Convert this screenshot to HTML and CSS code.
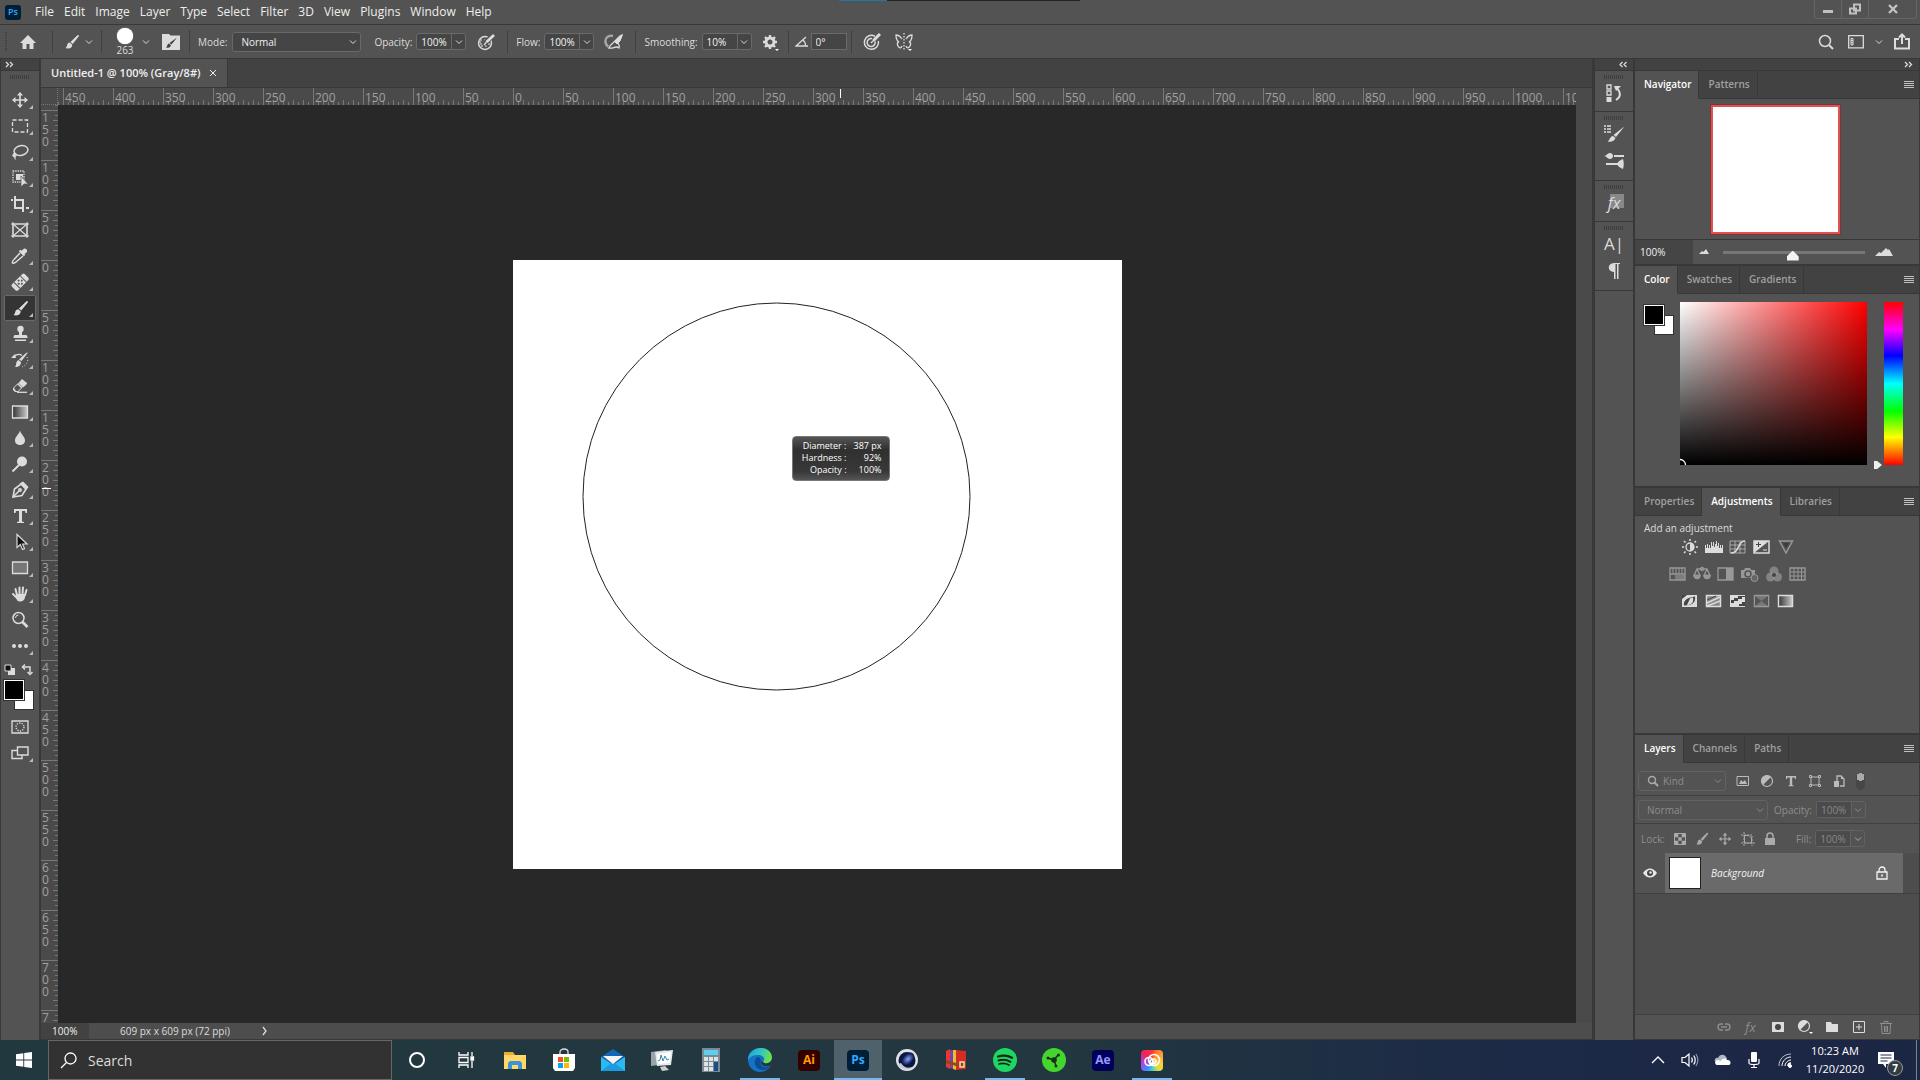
FILE: index.html
```html
<!DOCTYPE html>
<html lang="en">
<head>
    <meta charset="UTF-8">
    <meta name="viewport" content="width=device-width, initial-scale=1.0">
    <title>Untitled-1 @ 100% (Gray/8#)</title>
    <link rel="stylesheet" href="styles.css">
</head>
<body>
    <!-- shared icons -->
    <svg class="defs" width="0" height="0">
        <symbol id="chev" viewBox="0 0 8 8"><path d="M1 2.5l3 3 3-3" fill="none" stroke="currentColor"/></symbol>
        <symbol id="brush" viewBox="0 0 18 18"><path d="M16.5 1.2c.6.5.2 1.400-.2 2L9.800 11.200 7.300 9 14.500 2c.600-.600 1.400-1.300 2-.8zM6.600 9.700l2.600 2.300c.2 2-1.200 3.800-3.400 4.200-1.700.3-3.300 0-4.300-.4 1.600-.6 1.500-1.700 2-3.300.4-1.600 1.500-2.800 3.100-2.800z" fill="currentColor"/></symbol>
        <symbol id="menu" viewBox="0 0 10 9"><path d="M0 1.500h10M0 3.500h10M0 5.500h10M0 7.500h10" stroke="currentColor"/></symbol>
        <symbol id="move" viewBox="0 0 18 18"><path d="M9 3v12M3 9h12" stroke="currentColor" stroke-width="1.600"/><path d="M9 1l3 3.500H6zM9 17l3-3.500H6zM1 9l3.500-3v6zM17 9l-3.500-3v6z" fill="currentColor"/></symbol>
        <symbol id="half" viewBox="0 0 14 14"><circle cx="7" cy="7" r="5.500" fill="none" stroke="currentColor" stroke-width="1.200"/><path d="M3 11a5.600 5.600 0 0 1 8-8z" fill="currentColor"/></symbol>
    </svg>

    <nav class="menubar">
        <span class="ps-logo">Ps</span>
        <a href="#">File</a>
        <a href="#">Edit</a>
        <a href="#">Image</a>
        <a href="#">Layer</a>
        <a href="#">Type</a>
        <a href="#">Select</a>
        <a href="#">Filter</a>
        <a href="#">3D</a>
        <a href="#">View</a>
        <a href="#">Plugins</a>
        <a href="#">Window</a>
        <a href="#">Help</a>
        <div class="top-line"></div>
        <div class="win-btns">
            <button aria-label="Minimize"><svg width="12" height="12"><path d="M1 8.500h10" stroke="currentColor" stroke-width="3"/></svg></button>
            <button aria-label="Restore"><svg width="12" height="12" fill="none" stroke="currentColor" stroke-width="2"><path d="M5 1.500h6v6H5zM1 5.500h6v5H1z"/></svg></button>
            <button class="close" aria-label="Close"><svg width="12" height="12"><path d="M2 2l8 8M10 2l-8 8" stroke="currentColor" stroke-width="2.400"/></svg></button>
        </div>
    </nav>

    <header class="options">
        <i class="grip-v"></i>
        <button class="ico home" aria-label="Home"><svg width="16" height="16"><path d="M8 1L0 9h2.500v6H6.500v-5h3v5h4V9H16z" fill="currentColor"/></svg></button>
        <i class="sep"></i>
        <button class="ico w28" aria-label="Brush"><svg width="16" height="18"><use href="#brush"/></svg></button>
        <button class="ico" aria-label="Tool presets"><svg width="8" height="8"><use href="#chev"/></svg></button>
        <i class="sep"></i>
        <button class="brush-size" aria-label="Brush size"><i class="dot"></i><span>263</span></button>
        <button class="ico w12" aria-label="Brush presets"><svg width="8" height="8"><use href="#chev"/></svg></button>
        <button class="ico sheet" aria-label="Brush settings"><svg width="18" height="18"><path d="M0 1h7l1.500 1.500H18V17H0z" fill="#dcdcdc"/><path d="M15 4.500l-5.500 7-2-1.500zM7 10.500l2 1.700c-.5 2-2.500 3-5 2.500 1.500-1 1-3.800 3-4.200z" fill="#424242"/></svg></button>
        <i class="sep"></i>
        <label for="mode">Mode:</label>
        <span class="select mode"><select id="mode"><option>Normal</option></select><svg width="8" height="8"><use href="#chev"/></svg></span>
        <label class="far" for="opacity">Opacity:</label>
        <span class="num"><input id="opacity" value="100%"><button aria-label="Opacity slider"><svg width="8" height="8"><use href="#chev"/></svg></button></span>
        <button class="ico pressure" aria-label="Pressure for opacity"><svg width="18" height="18" fill="none" stroke="currentColor"><circle cx="8" cy="10" r="6.500" stroke-width="1.400"/><path d="M3 7h2m2 0h2M2 9h2m2 0h2m2 0h2M3 11h2m2 0h2m2 0h2M4 13h2m2 0h2" stroke-width="1.600" opacity=".75"/><path d="M16.500 1.500L9 9l-1.500 2.500" stroke="#535353" stroke-width="5"/><path d="M17 2L9.500 9" stroke-width="2.800"/><path d="M9.500 9L7 12" stroke-width="1.300"/></svg></button>
        <i class="sep"></i>
        <label for="flow">Flow:</label>
        <span class="num"><input id="flow" value="100%"><button aria-label="Flow slider"><svg width="8" height="8"><use href="#chev"/></svg></button></span>
        <button class="ico pressure" aria-label="Airbrush"><svg width="20" height="18" fill="none" stroke="currentColor"><path d="M9 3C4 2 1 5 1.500 9c.3 2.500 1.500 4 3 4.500" stroke-width="2.500" opacity=".6"/><path d="M5 15c1-4 5-5.500 7-8l4-4 2-1-1 3-3 4c-1 2 3 3 1 6-3-3-6 1-9 0z" stroke-width="1.300"/><path d="M11 9l7-7-2 6-3 3z" fill="currentColor"/></svg></button>
        <i class="sep"></i>
        <label for="smooth">Smoothing:</label>
        <span class="num"><input id="smooth" value="10%"><button aria-label="Smoothing slider"><svg width="8" height="8"><use href="#chev"/></svg></button></span>
        <button class="ico gear" aria-label="Smoothing options"><svg width="18" height="18"><circle cx="9" cy="9" r="4" fill="none" stroke="currentColor" stroke-width="3"/><path d="M9 2v3M9 13v3M2 9h3M13 9h3M4 4l2 2M12 12l2 2M14 4l-2 2M6 12l-2 2" stroke="currentColor" stroke-width="2.400"/><path d="M14 16h4l-2 2z" fill="#fff"/></svg></button>
        <i class="sep"></i>
        <label class="angle" for="angle" aria-label="Angle"><svg width="14" height="12" fill="none" stroke="currentColor" stroke-width="1.300"><path d="M11 1L1 10h12"/><path d="M8 4c2 1.500 2.500 4 2.500 6"/></svg></label>
        <input class="box" id="angle" value="0°">
        <i class="sep"></i>
        <button class="ico w32" aria-label="Pressure for size"><svg width="18" height="18" fill="none" stroke="currentColor" stroke-width="1.500"><path d="M15.300 8A7 7 0 1 1 12 3.300M12 8.500A4 4 0 1 1 9 5.600"/><path d="M8 10l3-3" /><path d="M17 1l-6.500 6.500" stroke-width="3"/></svg></button>
        <button class="ico w32" aria-label="Symmetry"><svg width="18" height="18" fill="none" stroke="currentColor" stroke-width="1.300"><path d="M7 6C5 3 3 2 1 2c0 3 1 6 3 7-2 0-2 2-1 4s3 3 4 0M11 6c2-3 4-4 6-4 0 3-1 6-3 7 2 0 2 2 1 4s-3 3-4 0"/><path d="M9 0v18" stroke-dasharray="1.500 1.500"/><path d="M13 16h4l-2 2z" fill="#fff" stroke="none"/></svg></button>
        <div class="right">
            <button class="ico" aria-label="Search"><svg width="16" height="16" fill="none" stroke="currentColor"><circle cx="7" cy="7" r="5.500" stroke-width="1.500"/><path d="M11 11l4 4" stroke-width="2"/></svg></button>
            <button class="ico" aria-label="Workspace"><svg width="16" height="14" fill="none" stroke="currentColor" stroke-width="1.300"><path d="M.7.7h14.600v12.100H.7z"/><path d="M3 3.500h2v6.500H3zM3 5.500h2M3 7.700h2" stroke-width="1"/></svg></button>
            <button class="ico chev" aria-label="Workspace list"><svg width="8" height="8"><use href="#chev"/></svg></button>
            <button class="ico" aria-label="Share"><svg width="16" height="17" fill="none" stroke="currentColor" stroke-width="2"><path d="M5 6H1v9.500h14V6h-4M8 11V2M5 4.500L8 1.500l3 3"/></svg></button>
        </div>
    </header>

    <main class="work">
        <aside class="toolbar">
            <div class="strip left"><svg width="9" height="7" fill="none" stroke="currentColor" stroke-width="1.300"><path d="M1 1l2.500 2.500L1 6M5 1l2.500 2.500L5 6"/></svg></div>
            <i class="grip"></i>
            <button class="tool" aria-label="Move"><svg width="18" height="18"><use href="#move"/></svg></button>
            <button class="tool" aria-label="Marquee"><svg width="18" height="18"><path d="M1.500 3h15v12h-15z" fill="none" stroke="currentColor" stroke-width="1.300" stroke-dasharray="4 2"/></svg></button>
            <button class="tool" aria-label="Lasso"><svg width="18" height="18" fill="none" stroke="currentColor" stroke-width="1.500"><ellipse cx="10" cy="7.500" rx="7" ry="4.800" transform="rotate(-12 10 7.500)"/><path d="M5 11c-3-1-4 2-2 2.500s3-2 1-2.500 1 4 0 5.500" stroke-width="1.300"/></svg></button>
            <button class="tool" aria-label="Object selection"><svg width="18" height="18"><path d="M2 2h11v11H2z" fill="none" stroke="currentColor" stroke-width="1.300" stroke-dasharray="1.300 1"/><path d="M5 5h7v6H5z" fill="currentColor"/><path d="M10 7l7 8h-4l-3 3z" fill="currentColor" stroke="#535353" stroke-width=".7"/></svg></button>
            <button class="tool" aria-label="Crop"><svg width="18" height="18" fill="none" stroke="currentColor" stroke-width="2"><path d="M0 5h2M4 1v12h9M5 5h7v12M15 13h3"/></svg></button>
            <button class="tool plain" aria-label="Frame"><svg width="18" height="18" fill="none" stroke="currentColor"><path d="M2 3h14v12H2z" stroke-width="1.600"/><path d="M2 3l14 12M16 3L2 15" stroke-width="1.200"/><path d="M0 3h2M16 3h2M0 15h2M16 15h2M2 1v2M16 1v2M2 17v-2M16 17v-2"/></svg></button>
            <button class="tool" aria-label="Eyedropper"><svg width="18" height="18"><path d="M12 2.500c2-2.500 5.500.5 3.500 3L13.500 7l.8.8-1.500 1.500-5-5L9.300 2.800l1 1z" fill="currentColor"/><path d="M9 6l-6 6.500c-1 1-2 3-1.500 3.500s2.500 0 3.500-1L12 9" fill="none" stroke="currentColor" stroke-width="1.500"/></svg></button>
            <button class="tool" aria-label="Healing brush"><svg width="18" height="18"><g transform="rotate(-45 9 9)"><rect x="0" y="5" width="18" height="8.500" rx="2" fill="currentColor"/><path d="M4.500 5v9M13.500 5v9" stroke="#535353"/><g fill="#535353"><circle cx="9" cy="7" r="1"/><circle cx="9" cy="11.500" r="1"/><circle cx="6.800" cy="9.300" r="1"/><circle cx="11.200" cy="9.300" r="1"/></g></g></svg></button>
            <button class="tool active" aria-label="Brush"><svg width="17" height="17"><use href="#brush"/></svg></button>
            <button class="tool" aria-label="Clone stamp"><svg width="18" height="18" fill="currentColor"><circle cx="9.500" cy="4" r="3.200"/><path d="M8 6h3v4h4c1 0 1.500 1 1.500 3h-14c0-2 .5-3 1.500-3h4zM4 14.500h11V16H4z"/></svg></button>
            <button class="tool" aria-label="History brush"><svg width="18" height="18"><path d="M17 1.500L10.500 10 8 8.500 15 2zM7.500 9l2.500 2c0 3-2 5-6 5 2-2 0-5 3.500-7z" fill="currentColor"/><path d="M0 7l4-4 1 4z" fill="currentColor"/><path d="M3 5c3-2 6-2 8-.5" fill="none" stroke="currentColor" stroke-width="1.300"/><path d="M16 6c2 4 0 8-5 10" fill="none" stroke="currentColor" stroke-dasharray="1 2"/></svg></button>
            <button class="tool" aria-label="Eraser"><svg width="18" height="18"><path d="M2 11l5-5 4.500 4.500L7 15H4l-2-2zM11 2l5 4c.5 1-4 4.500-4 4.500L7.500 6z" fill="currentColor"/><path d="M3 11l3.500-3.500L10 11l-3 3H5z" fill="#535353"/><path d="M6 15.300h10" stroke="currentColor" stroke-width="1.300"/></svg></button>
            <button class="tool" aria-label="Gradient"><svg width="18" height="18"><linearGradient id="gr"><stop stop-color="#333"/><stop offset="1" stop-color="#ccc"/></linearGradient><path d="M1.500 3h15v12h-15z" fill="url(#gr)" stroke="currentColor" stroke-width="1.300"/></svg></button>
            <button class="tool" aria-label="Blur"><svg width="18" height="18"><path d="M9 1.500c1 4 5 6 5 10 0 6-10 6-10 0 0-4 4-6 5-10z" fill="currentColor"/></svg></button>
            <button class="tool" aria-label="Dodge"><svg width="18" height="18"><circle cx="11" cy="6.500" r="5" fill="currentColor"/><path d="M8 10l-6.500 6.500" stroke="currentColor" stroke-width="2"/></svg></button>
            <button class="tool" aria-label="Pen"><svg width="18" height="18" fill="none" stroke="currentColor" stroke-width="1.600"><path d="M2 16l1.500-8L10 3l5 5-4 6.500z"/><path d="M10 2.500l5 5.500 1.500-2-4.500-4.500z" fill="currentColor"/><path d="M2 16l6-6"/><circle cx="9" cy="9" r="1.200"/></svg></button>
            <button class="tool" aria-label="Type"><svg width="18" height="18"><path d="M3 2h13v4h-1.500L14 4h-3v10.500l2 .5v1H6v-1l2-.5V4H5l-.5 2H3z" fill="currentColor"/></svg></button>
            <button class="tool" aria-label="Path selection"><svg width="18" height="18"><path d="M6 1.500v13l3.300-3 2.200 5 2-.9-2-4.600H16z" fill="#111" stroke="currentColor" stroke-width="1.200"/></svg></button>
            <button class="tool" aria-label="Rectangle"><svg width="18" height="18"><path d="M1.500 3h15v11.500h-15z" fill="#777" stroke="currentColor" stroke-width="1.300"/></svg></button>
            <button class="tool" aria-label="Hand"><svg width="18" height="18" fill="none" stroke="currentColor" stroke-width="2" stroke-linecap="round"><path d="M6 10L4.500 4M8.500 9V2.500M11.500 9l.5-6.500M14 10l1.500-5M6 13L2 9"/><path d="M5 9h9.500c0 3-1 7.500-5 7.500S6 14 5 13z" fill="currentColor" stroke="none"/></svg></button>
            <button class="tool plain" aria-label="Zoom"><svg width="18" height="18" fill="none" stroke="currentColor"><circle cx="7.500" cy="7" r="5.500" stroke-width="1.500"/><path d="M4.500 7a3 3 0 0 1 3-3"/><path d="M11.500 11l5 5" stroke-width="2.600"/></svg></button>
            <button class="tool" aria-label="More tools"><svg width="18" height="18" fill="currentColor"><circle cx="3" cy="9" r="2"/><circle cx="9" cy="9" r="2"/><circle cx="15" cy="9" r="2"/></svg></button>
            <div class="mini">
                <svg width="12" height="12"><path d="M4 4h7v7H4z" fill="#dcdcdc"/><path d="M1 1h6v6H1z" fill="#111" stroke="#dcdcdc"/></svg>
                <svg width="12" height="12" fill="none" stroke="currentColor" stroke-width="1.500"><path d="M2 3h7v6"/><path d="M4 .500L1.500 3 4 5.500M6.500 8L9 10.500 11.500 8"/></svg>
            </div>
            <div class="swatches"><i class="bg"></i><i class="fg"></i></div>
            <button class="tool plain" aria-label="Quick mask"><svg width="18" height="18" fill="none" stroke="currentColor" stroke-width="1.300"><path d="M1 3h16v12H1z"/><circle cx="9" cy="9" r="4" stroke-dasharray="1.300 1.200"/></svg></button>
            <button class="tool" aria-label="Screen mode"><svg width="18" height="18" stroke="currentColor" stroke-width="1.400"><path d="M1 6.500h10v8H1z" fill="none"/><path d="M6.500 3h10.500v8H6.500z" fill="#535353"/></svg></button>
        </aside>

        <section class="doc">
            <div class="tabs"><div class="doc-tab">Untitled-1 @ 100% (Gray/8#)<button aria-label="Close tab"><svg width="8" height="8"><path d="M1 1l6 6M7 1L1 7" stroke="currentColor"/></svg></button></div></div>
            <div class="view">
                <i class="corner"></i>
                <div class="ruler-h">
                    <span>450</span><span>400</span><span>350</span><span>300</span><span>250</span><span>200</span><span>150</span><span>100</span><span>50</span><span>0</span>
                    <span>50</span><span>100</span><span>150</span><span>200</span><span>250</span><span>300</span><span>350</span><span>400</span><span>450</span><span>500</span>
                    <span>550</span><span>600</span><span>650</span><span>700</span><span>750</span><span>800</span><span>850</span><span>900</span><span>950</span><span>1000</span><span>1050</span>
                    <i class="mark"></i>
                </div>
                <i class="scroll"></i>
                <div class="ruler-v">
                    <span>150</span><span>100</span><span>50</span><span>0</span><span>50</span><span>100</span><span>150</span><span>200</span><span>250</span><span>300</span>
                    <span>350</span><span>400</span><span>450</span><span>500</span><span>550</span><span>600</span><span>650</span><span>700</span><span>750</span>
                    <i class="mark"></i>
                </div>
                <div class="canvas">
                    <div class="page">
                        <svg class="cursor" width="389" height="389"><circle cx="194.500" cy="194.500" r="193.500" fill="none" stroke="#222"/></svg>
                        <dl class="hud">
                            <dt>Diameter :</dt><dd>387 px</dd>
                            <dt>Hardness :</dt><dd>92%</dd>
                            <dt>Opacity :</dt><dd>100%</dd>
                        </dl>
                    </div>
                </div>
                <i class="scroll"></i>
            </div>
            <footer class="status">
                <input aria-label="Zoom" value="100%">
                <span class="info">609 px x 609 px (72 ppi)</span>
                <svg width="6" height="10"><path d="M1 1l3 4-3 4" fill="none" stroke="currentColor" stroke-width="1.300"/></svg>
            </footer>
        </section>

        <aside class="dock">
            <div class="strip"><svg width="9" height="7" fill="none" stroke="currentColor" stroke-width="1.300"><path d="M3.500 1L1 3.500 3.500 6M7.500 1L5 3.500 7.500 6"/></svg></div>
            <div class="group"><i class="grip"></i>
                <button aria-label="History"><svg width="20" height="20" fill="none" stroke="currentColor" stroke-width="1.300"><path d="M3 2h4v4H3zM3 8h4v4H3z"/><path d="M2.500 14h5v5h-5z" fill="currentColor" stroke="none"/><path d="M12 17c5-3 5-7 1-12" stroke-width="2"/><path d="M10 3h7l-5 5z" fill="currentColor" stroke="none"/></svg></button>
            </div>
            <div class="group"><i class="grip"></i>
                <button aria-label="Brush settings"><svg width="22" height="20"><path d="M1 2h2M1 5h2M1 8h2M4 2h4M4 5h4M4 8h4" stroke="currentColor" stroke-width="1.500"/><path d="M21 3l-8 10-2.500-2L20 3.500zM10 12l2.500 2c-1 3-4 4.500-8 3.500 2.500-1 2-5 5.500-5.500z" fill="currentColor"/></svg></button>
                <button aria-label="Brushes"><svg width="20" height="20" fill="currentColor"><path d="M0 5c3 0 3-3 6-3 4 0 4 6 0 6-3 0-3-3-6-3zM10 4h10v2H10zM2 12h12v2H2zM13 13c1-3 4-4 6-5 1 3 1 7 0 10-2-1-5-2-6-5z"/></svg></button>
            </div>
            <div class="group"><i class="grip"></i>
                <button class="fx" aria-label="Styles">fx</button>
            </div>
            <div class="group"><i class="grip"></i>
                <button class="chr" aria-label="Character">A|</button>
                <button aria-label="Paragraph"><svg width="14" height="18"><path d="M7 10C0 10 0 1 7 1h6v1h-1.500v15H10V2H8.500v15H7z" fill="currentColor"/></svg></button>
            </div>
            <div class="rest"></div>
        </aside>

        <aside class="panels">
            <div class="strip"><svg width="9" height="7" fill="none" stroke="currentColor" stroke-width="1.300"><path d="M1 1l2.500 2.500L1 6M5 1l2.500 2.500L5 6"/></svg></div>

            <section class="panel navigator">
                <div class="ptabs"><button class="on">Navigator</button><button>Patterns</button><svg width="10" height="9"><use href="#menu"/></svg></div>
                <div class="thumb-wrap"><i class="thumb"></i></div>
                <div class="zoomrow">
                    <input class="zoomval" aria-label="Zoom level" value="100%">
                    <svg width="10" height="6"><path d="M0 5l3-3 1.500 1L7 0l3 5z" fill="currentColor"/></svg>
                    <input class="zoom" type="range" aria-label="Zoom slider" value="49">
                    <svg width="18" height="9"><path d="M0 8l4-4 2 1 5-5 2 2 1-1 4 7z" fill="currentColor"/></svg>
                </div>
            </section>

            <section class="panel color">
                <div class="ptabs"><button class="on">Color</button><button>Swatches</button><button>Gradients</button><svg width="10" height="9"><use href="#menu"/></svg></div>
                <div class="picker">
                    <div class="swatches"><i class="bg"></i><i class="fg"></i></div>
                    <div class="field"><svg width="7" height="7"><circle cx="0" cy="7" r="5.500" fill="none" stroke="#fff" stroke-width="1.300"/></svg></div>
                    <input class="hue" type="range" aria-label="Hue" min="0" max="360" value="0">
                </div>
            </section>

            <section class="panel adjust">
                <div class="ptabs"><button>Properties</button><button class="on">Adjustments</button><button>Libraries</button><svg width="10" height="9"><use href="#menu"/></svg></div>
                <p>Add an adjustment</p>
                <div class="adj a1">
                    <svg width="18" height="16"><circle cx="9" cy="8" r="4" fill="none" stroke="currentColor" stroke-width="1.300"/><path d="M9 4a4 4 0 0 1 0 8z" fill="currentColor"/><path d="M9 0v2M9 14v2M1 8h2M15 8h2M3 2l1.500 1.500M13.500 12.500L15 14M15 2l-1.500 1.500M4.500 12.500L3 14" stroke="currentColor" stroke-width="1.500"/></svg>
                    <svg width="18" height="16"><path d="M0 14V6l1 0v3h1V5h1v4h1V6h1v3h1V3h1v4h1V3h1v5h1V5h1V2h1v5h1V4h1v5h1V6h1v3h1v-3h1v8z" fill="currentColor"/></svg>
                    <svg width="18" height="16" fill="none" stroke="currentColor"><path d="M1 2h15v12H1zM6 2v12M11 2v12M1 6h15M1 10h15" opacity=".6"/><path d="M2 14c9 0 6-12 14-12" stroke-width="1.600"/></svg>
                    <svg width="18" height="16"><path d="M1 2h15v12H1z" fill="none" stroke="currentColor" stroke-width="1.500"/><path d="M1 14V2h15z" fill="currentColor"/><path d="M3 5.500h5M5.500 3v5" stroke="#444"/><path d="M10 11h4" stroke="currentColor"/></svg>
                    <svg class="dim" width="18" height="16"><path d="M2.500 2h13L9 14z" fill="#505050" stroke="currentColor" stroke-width="1.500"/><path d="M6 4h6l-3 5z" fill="#3c3c3c"/></svg>
                </div>
                <div class="adj a2 dim">
                    <svg width="18" height="16"><path d="M1 2h15v12H1zM1 8h15" fill="none" stroke="currentColor" stroke-width="1.300"/><path d="M4 2v6M7 2v6M10 2v6M13 2v6" stroke="currentColor"/><path d="M6 9h10v5H6z" fill="currentColor" opacity=".6"/></svg>
                    <svg width="18" height="16" fill="none" stroke="currentColor" stroke-width="1.300"><path d="M4 3h10M4 3L1 9.500h6zM14 3l-3 6.500h6z"/><circle cx="9" cy="3" r="1.500"/><path d="M1 9.500h6c0 4-6 4-6 0zM11 9.500h6c0 4-6 4-6 0z" fill="currentColor"/></svg>
                    <svg width="18" height="16"><path d="M1 2h15v12H1z" fill="none" stroke="currentColor" stroke-width="1.300"/><path d="M9 2h7v12H9z" fill="currentColor"/></svg>
                    <svg width="18" height="16"><path d="M0 4h3l1-2h5l1 2h4v8H0z" fill="currentColor"/><circle cx="7" cy="8" r="3" fill="#999" stroke="#535353" stroke-width="1.500"/><circle cx="13.500" cy="12" r="3.500" fill="#666" stroke="currentColor"/></svg>
                    <svg width="18" height="16" fill="currentColor"><circle cx="9" cy="5" r="4.500" opacity=".7"/><circle cx="5.500" cy="11" r="4.500" opacity=".7"/><circle cx="12.500" cy="11" r="4.500" opacity=".7"/><circle cx="9" cy="9" r="2" fill="#444"/></svg>
                    <svg width="18" height="16" fill="none" stroke="currentColor"><path d="M1 2h15v12H1z" stroke-width="1.300"/><path d="M5 2v12M9 2v12M12.500 2v12M1 6h15M1 10h15"/></svg>
                </div>
                <div class="adj a3">
                    <svg width="18" height="16"><path d="M1 2h15v12H1z" fill="#dcdcdc"/><path d="M3 12.500c-1-5 3-8 11-9 1 6-3 9-11 9z" fill="#444"/><path d="M6 12c4 0 7-2 6-7.500-1 0-2 0-3 1z" fill="#dcdcdc"/><path d="M1 2h5L1 6z" fill="#444"/></svg>
                    <svg width="18" height="16"><path d="M1.500 2.500h14v11h-14z" fill="#888" stroke="currentColor" stroke-width="1.500"/><path d="M2 10l13-6M2 13l13-5" stroke="currentColor" stroke-width="1.500"/><path d="M2 7l9-4" stroke="#444"/></svg>
                    <svg width="18" height="16"><path d="M1 2h15v12H1z" fill="#dcdcdc"/><path d="M2 7h3V5h4V3h7v1h-3v2H9v2H5v2H2zM7 13h3v-2h3V9h3v4z" fill="#444"/></svg>
                    <svg class="dim" width="18" height="16"><path d="M1.500 2.500h14v11h-14z" fill="#777" stroke="currentColor" stroke-width="1.500"/><path d="M2 3l6.500 5L2 13zM15 3L8.500 8l6.500 5z" fill="#555"/></svg>
                    <svg width="18" height="16"><path d="M1.500 2.500h14v11h-14z" fill="url(#gr)" stroke="currentColor" stroke-width="1.500"/></svg>
                </div>
            </section>

            <section class="panel layers">
                <div class="ptabs"><button class="on">Layers</button><button>Channels</button><button>Paths</button><svg width="10" height="9"><use href="#menu"/></svg></div>
                <div class="lrow filter">
                    <span class="select kind"><svg width="12" height="12" fill="none" stroke="#aaa"><circle cx="5" cy="5" r="3.500" stroke-width="1.400"/><path d="M7.500 7.500L11 11" stroke-width="2"/></svg><select aria-label="Filter kind"><option>Kind</option></select><svg width="8" height="8"><use href="#chev"/></svg></span>
                    <svg width="14" height="14"><path d="M1 2.500h11.500v9H1z" fill="none" stroke="currentColor"/><path d="M3 10l2-4 2 2 2-2 2 4z" fill="currentColor"/></svg>
                    <svg width="14" height="14"><use href="#half"/></svg>
                    <svg width="14" height="14"><path d="M2 2h10v3h-1l-.5-1.500H8.200V11l1.300.5v.8h-5v-.8l1.300-.5V3.500H3.500L3 5H2z" fill="currentColor"/></svg>
                    <svg width="14" height="14" fill="none" stroke="currentColor"><path d="M3 3h8v8H3z"/><path d="M1.500 1.500h2v2h-2zM10.500 1.500h2v2h-2zM1.500 10.500h2v2h-2zM10.500 10.500h2v2h-2z"/></svg>
                    <svg width="14" height="14"><path d="M5 7V2h4l3 3v7H8" fill="none" stroke="currentColor" stroke-width="1.300"/><path d="M2 7h5v6H2zM9 2v3h3z" fill="currentColor"/></svg>
                    <input class="toggle" type="checkbox" aria-label="Layer filtering">
                </div>
                <div class="lrow">
                    <span class="select blend"><select aria-label="Blend mode"><option>Normal</option></select><svg width="8" height="8"><use href="#chev"/></svg></span>
                    <label for="lopacity">Opacity:</label>
                    <span class="num"><input id="lopacity" value="100%"><button aria-label="Layer opacity slider"><svg width="8" height="8"><use href="#chev"/></svg></button></span>
                </div>
                <div class="lrow lock">
                    <span class="lab">Lock:</span>
                    <svg width="12" height="12"><path d="M.5.500h11v11H.5z" fill="none" stroke="currentColor"/><path d="M1 1h3.300v3.300H1zM7.700 1H11v3.300H7.700zM4.300 4.300h3.400v3.400H4.300zM1 7.700h3.300V11H1zM7.700 7.700H11V11H7.700z" fill="currentColor"/></svg>
                    <svg width="14" height="14"><use href="#brush"/></svg>
                    <svg width="14" height="14"><use href="#move"/></svg>
                    <svg width="14" height="14" fill="none" stroke="currentColor"><path d="M3 0v14M0 3h11v11M0 11h14" stroke-dasharray="2 1"/><path d="M3.500 3.500H8l2.500 2.500v5h-7z"/></svg>
                    <svg width="12" height="14"><path d="M3 6V4a3 3 0 0 1 6 0v2" fill="none" stroke="currentColor" stroke-width="1.500"/><path d="M1 6h10v7H1z" fill="currentColor"/></svg>
                    <label class="fill" for="lfill">Fill:</label>
                    <span class="num"><input id="lfill" value="100%"><button aria-label="Fill slider"><svg width="8" height="8"><use href="#chev"/></svg></button></span>
                </div>
                <div class="list">
                    <div class="layer">
                        <button class="eye" aria-label="Layer visibility"><svg width="14" height="10"><path d="M0 5c4-6 10-6 14 0-4 6-10 6-14 0z" fill="#e8e8e8"/><circle cx="7" cy="5" r="3" fill="#444"/><circle cx="7.500" cy="4.500" r="1.200" fill="#eee"/></svg></button>
                        <div class="lname"><i></i><em>Background</em><svg width="12" height="14" fill="none" stroke="currentColor" stroke-width="1.300"><path d="M3 6V4a3 3 0 0 1 6 0v2M1 6h10v7H1z"/><path d="M6 8.500v2" stroke-width="1.600"/></svg></div>
                    </div>
                </div>
                <div class="lfoot">
                    <button class="off" aria-label="Link layers"><svg width="14" height="14" fill="none" stroke="currentColor" stroke-width="1.400"><path d="M6 4H4a3 3 0 0 0 0 6h2M8 4h2a3 3 0 0 1 0 6H8M4 7h6"/></svg></button>
                    <button class="off lfx" aria-label="Layer style">fx</button>
                    <button aria-label="Add mask"><svg width="14" height="12"><path d="M1 1h12v10H1z" fill="currentColor"/><circle cx="7" cy="6" r="3" fill="#444"/></svg></button>
                    <button aria-label="Adjustment layer"><svg width="16" height="16"><use href="#half" width="14" height="14"/><path d="M12 13h4l-2 2z" fill="#fff"/></svg></button>
                    <button aria-label="New group"><svg width="14" height="12"><path d="M1 1h5l1 2h6v8H1z" fill="currentColor"/></svg></button>
                    <button aria-label="New layer"><svg width="12" height="12" fill="none" stroke="currentColor"><path d="M.5.500h11v11H.5zM6 3v6M3 6h6"/></svg></button>
                    <button class="off" aria-label="Delete layer"><svg width="12" height="13" fill="none" stroke="currentColor"><path d="M0 2.500h12M4 2V.5h4V2M1.500 3l.5 9.500h8l.5-9.500M4.500 5v6M6 5v6M7.500 5v6"/></svg></button>
                </div>
            </section>
        </aside>
    </main>

    <footer class="taskbar">
        <button class="start" aria-label="Start"><svg width="16" height="16" fill="#fff"><path d="M0 2.300L7.300 1.200v6.300H0zM8.200 1L16 0v7.500H8.200zM0 8.400h7.300v6.400L0 13.700zM8.200 8.400H16V16l-7.800-1.100z"/></svg></button>
        <label class="search" for="search"><svg width="17" height="17" fill="none" stroke="#fff" stroke-width="1.300"><circle cx="10.500" cy="6.500" r="5.500"/><path d="M6.500 10.500L1 16"/></svg><input id="search" placeholder="Search"></label>
        <div class="apps">
            <button aria-label="Cortana"><svg width="18" height="18"><circle cx="9" cy="9" r="7" fill="none" stroke="#fff" stroke-width="2"/></svg></button>
            <button aria-label="Task view"><svg width="18" height="18" fill="none" stroke="#fff" stroke-width="1.300"><path d="M2 1v3h9V1M2 6.500h9v5H2zM2 17v-3h9v3M15 1v4M15 10v7"/><path d="M14 6h2.500v3H14z" fill="#fff"/></svg></button>
            <button aria-label="File Explorer"><svg width="24" height="24"><path d="M1 4h9l2 3h11v14H1z" fill="#e8ae2e"/><path d="M1 7h22v14H1z" fill="#ffd868"/><path d="M5 21v-6l2-2h10l2 2v6h-4v-4H9v4z" fill="#3b94d9"/></svg></button>
            <button aria-label="Store"><svg width="24" height="24"><path d="M8 7V4c0-4 8-4 8 0v3" fill="none" stroke="#ddd" stroke-width="1.300"/><path d="M1 6h22v14l-2 3H3l-2-3z" fill="#fff"/><path d="M6 9h5v5H6z" fill="#f25022"/><path d="M12 9h5v5h-5z" fill="#7fba00"/><path d="M6 15h5v5H6z" fill="#00a4ef"/><path d="M12 15h5v5h-5z" fill="#ffb900"/></svg></button>
            <button aria-label="Mail"><svg width="24" height="24"><path d="M0 9l12-8 12 8v14H0z" fill="#1266b5"/><path d="M0 9l12 8L24 9v14H0z" fill="#2eb8f0"/><path d="M0 23l12-9 12 9z" fill="#1c9be0"/><path d="M2 8h20l-10 8z" fill="#f4f4f4"/></svg></button>
            <button aria-label="Resource Monitor"><svg width="24" height="24"><path d="M1 4l15-2v14L1 18z" fill="#9aa4a8"/><path d="M5 4l18-2-2 15-14 1z" fill="#e3e8ea"/><path d="M7 6l14-2-1.500 11L8 16z" fill="#fff"/><path d="M8 13l2-1 1-5 2 6 2-5 2 4 2-1" fill="none" stroke="#3787b5"/><path d="M10 19l5-1 4 4-7 1z" fill="#ccc"/></svg></button>
            <button aria-label="Calculator"><svg width="20" height="24"><path d="M1 0h18v24H1z" fill="#7d8890"/><path d="M3 2h14v5H3z" fill="#5cd0f3"/><path d="M3 9h4v4H3zM8 9h4v4H8zM13 9h4v4h-4zM3 14h4v4H3zM8 14h4v4H8zM3 19h4v4H3zM8 19h4v4H8z" fill="#dde2e6"/><path d="M13 14h4v9h-4z" fill="#164d8c"/></svg></button>
            <button class="run" aria-label="Edge"><svg width="24" height="24"><linearGradient id="eg" x2="1" y2=".3"><stop stop-color="#1b9de2"/><stop offset=".6" stop-color="#35c8c0"/><stop offset="1" stop-color="#6ce04d"/></linearGradient><circle cx="12" cy="12" r="12" fill="#1473c4"/><path d="M0 11C1-3 24-4 24 10c0 5-7 7-9 4 3-3 0-7-4-7C6 7 1 8 0 13z" fill="url(#eg)"/><path d="M9 9c-6 7 1 16 10 12l3-3c-5 3-11 0-9-5-1-1 1-4-4-4z" fill="#0c4d94"/><path d="M15 14c2 3 9 1 9-4v5l-2 3c-5 1-9 0-9-5z" fill="#22373f"/></svg></button>
            <button aria-label="Illustrator"><span class="app ai">Ai</span></button>
            <button class="run cur" aria-label="Photoshop"><span class="app ps">Ps</span></button>
            <button aria-label="Cinema 4D"><svg width="24" height="24"><radialGradient id="c4"><stop stop-color="#8da6e8"/><stop offset=".7" stop-color="#26388a"/><stop offset="1" stop-color="#0b1030"/></radialGradient><circle cx="12" cy="12" r="11" fill="#dfe2ea"/><circle cx="12" cy="12.500" r="8.500" fill="#0e1640"/><ellipse cx="13" cy="11" rx="7.500" ry="5" transform="rotate(-45 13 11)" fill="url(#c4)"/><path d="M3 16c4 7 12 7 16 2-5 3-10 2-13-3z" fill="#c6cad4"/></svg></button>
            <button aria-label="WinRAR"><svg width="24" height="24"><path d="M2 3l4-2v20l-4-2z" fill="#e33"/><path d="M6 2h3v19l-3-1z" fill="#7b3fb5"/><path d="M9 2h3v20l-3-1z" fill="#e8c02c"/><path d="M12 2l10 1v18l-10 1z" fill="#d42b22"/><path d="M2 12l10 3 10-1v3l-10 1-10-3z" fill="#8a4b18"/><path d="M16 14h4v5h-4z" fill="none" stroke="#f0dfb0" stroke-width="1.500"/></svg></button>
            <button class="run" aria-label="Spotify"><svg width="24" height="24" fill="none" stroke="#10251a" stroke-linecap="round"><circle cx="12" cy="12" r="12" fill="#1ed760" stroke="none"/><path d="M5 8.500c5-1.500 10-1 14 1.300" stroke-width="2.300"/><path d="M5.500 12.500c4-1.200 8.500-.8 12 1.300" stroke-width="2"/><path d="M6 16c3.500-1 7-.6 10 1" stroke-width="1.700"/></svg></button>
            <button aria-label="Razer Cortex"><svg width="24" height="24"><circle cx="12" cy="12" r="12" fill="#44d62c"/><path d="M6 10l6 2 4-5M12 12l2 6" fill="none" stroke="#12301a" stroke-width="1.500"/><g fill="#12301a"><circle cx="6" cy="10" r="1.500"/><circle cx="16.500" cy="7" r="1.500"/><circle cx="14" cy="18" r="1.500"/><circle cx="12" cy="12" r="2.800"/></g></svg></button>
            <button aria-label="After Effects"><span class="app ae">Ae</span></button>
            <button class="run" aria-label="Creative Cloud"><span class="app cc"><svg width="18" height="16" fill="none" stroke="#fff" stroke-width="1.600"><circle cx="6" cy="9.500" r="4"/><circle cx="11" cy="8" r="5.500"/><path d="M6 9.500c1 0 2 3 5 2s2-5-1-4.500-2 2-4 2.500"/></svg></span></button>
        </div>
        <div class="tray">
            <button aria-label="Show hidden icons"><svg width="14" height="10"><path d="M1 8l6-6 6 6" fill="none" stroke="#fff" stroke-width="1.400"/></svg></button>
            <button aria-label="Volume"><svg width="18" height="16" fill="none" stroke="#fff" stroke-width="1.200"><path d="M1 5.500h3L8 2v12l-4-3.500H1z"/><path d="M10.500 5.500c1 1.500 1 3.500 0 5M12.700 3.500c2 3 2 6 0 9"/><path d="M15 2c2.500 4 2.500 8 0 12" opacity=".5"/></svg></button>
            <button aria-label="OneDrive"><svg width="18" height="14"><path d="M3 10C0 7 3 4 5 5c2-5 8-4 9 1z" fill="#aeb5c4"/><path d="M4 12c-3-1-2-5 1-5l3 1c1-3 5-3 6-1 4-1 5 5 1 5z" fill="#fff"/></svg></button>
            <button aria-label="Microphone"><svg width="12" height="18"><rect x="3" y="1" width="6" height="10" rx="1" fill="#fff"/><path d="M1 8v4c0 2 10 2 10 0V8M6 14v3M3 16.500h6" fill="none" stroke="#fff" stroke-width="1.200"/></svg></button>
            <button aria-label="Network"><svg width="16" height="16" fill="none" stroke="#fff"><path d="M1 14C1 7 6 2 13 2" opacity=".7"/><path d="M4 14c0-5 4-9 9-9M7 14c0-3 3-6 6-6"/><path d="M10 14c0-2 1-3 3-3" stroke-width="1.500"/><circle cx="12" cy="14" r="1.500" fill="#fff"/></svg></button>
            <div class="clock"><span>10:23 AM</span><span>11/20/2020</span></div>
            <button class="note" aria-label="Notifications"><svg width="18" height="18"><path d="M1 1h16v12H9v4l-3-4H1z" fill="#fff"/><path d="M3.500 4h11M3.500 7h11M3.500 10h7" stroke="#1d2b48" stroke-width="1.200"/></svg><b>7</b></button>
        </div>
    </footer>
</body>
</html>
```
FILE: styles.css
```css
*{margin:0;padding:0;box-sizing:border-box;}
html,body{height:100%;}
body{
    display: flex;
    flex-direction: column;
    overflow: hidden;
    background: #535353;
    color: #dcdcdc;
    font: 10px/14px "Open Sans","Noto Sans",sans-serif;
}
button,input,select{
    font: inherit;
    color: inherit;
    background: none;
    border: none;
    outline: none;
    appearance: none;
    min-width: 0;
}
a{color:inherit;text-decoration:none;}
svg{display:block;flex:none;}
i{display:block;}
.defs{position:absolute;}

/* menu */
.menubar{
    flex: none;
    display: flex;
    align-items: center;
    gap: 10px;
    height: 25px;
    padding-left: 5px;
    border-bottom: 1px solid #383838;
    font-size: 12px;
    color: #eee;
}
.ps-logo{
    width: 16px;
    height: 15px;
    margin-right: 4px;
    border-radius: 3px;
    background: #001e36;
    color: #31a8ff;
    font-size: 9px;
    font-weight: 600;
    text-align: center;
}
.top-line{
    align-self: flex-start;
    width: 241px;
    height: 1px;
    margin-left: 337px;
    background: linear-gradient(90deg,#2274b0 48px,#222 48px);
}
.win-btns{
    display: flex;
    align-self: flex-start;
    height: 19px;
    margin: 0 3px 0 auto;
    border: 1px solid #666;
    border-top: none;
    border-radius: 0 0 3px 3px;
    color: #c0c0c0;
}
.win-btns button{
    display: flex;
    align-items: center;
    justify-content: center;
    width: 27px;
    border-right: 1px solid #666;
}
.win-btns .close{width:47px;border:none;}

/* tool options */
.options{
    flex: none;
    display: flex;
    align-items: center;
    height: 34px;
    padding-left: 5px;
    border-bottom: 1px solid #383838;
}
.grip-v{
    width: 2px;
    height: 20px;
    background: repeating-linear-gradient(#404040 0 1px,transparent 1px 2px);
}
.sep{
    width: 1px;
    height: 23px;
    margin: 0 8px;
    background: #404040;
}
.ico{
    display: flex;
    align-items: center;
    justify-content: center;
}
.home{width:42px;}
.home + .sep{margin:0 6px 0 3px;}
.w12{width:12px;}
.w28{width:26px;}
.w32{width:32px;}
.brush-size{width:30px;text-align:center;}
.brush-size .dot{
    width: 16px;
    height: 16px;
    margin: 1px auto 0;
    border-radius: 50%;
    background: #fff;
    box-shadow: 0 0 1px #fff;
}
.brush-size span{display:block;line-height:13px;}
.sheet{width:26px;margin-left:6px;}
.sheet + .sep{margin-left:5px;}
.select{
    display: flex;
    align-items: center;
    height: 20px;
    margin-left: 5px;
    padding: 0 3px 0 8px;
    border: 1px solid #696969;
    border-radius: 3px;
    background: #454545;
}
.select select{flex:1;color:#f0f0f0;}
.mode{width:129px;}
.far{margin-left:13px;}
.num{
    display: flex;
    height: 17px;
    margin-left: 4px;
    border: 1px solid #6a6a6a;
    border-radius: 3px;
    background: #454545;
}
.num input{width:34px;padding-left:4px;color:#f4f4f4;}
.num button{
    display: flex;
    align-items: center;
    justify-content: center;
    width: 14px;
    border-left: 1px solid #6a6a6a;
}
.pressure{width:26px;margin-left:7px;}
.gear{width:20px;margin-left:8px;}
.gear + .sep{margin-right:6px;}
.angle{width:16px;}
.box{
    width: 36px;
    height: 17px;
    padding-left: 4px;
    border: 1px solid #6a6a6a;
    background: #454545;
    color: #f0f0f0;
}
.box + .sep{margin:0 4px;}
.right{
    display: flex;
    align-items: center;
    margin: 0 10px 0 auto;
    gap: 14px;
}
.right .chev{margin:0 -3px;}

/* work area */
.work{
    flex: 1;
    min-height: 0;
    display: flex;
    background: #383838;
}
.strip{
    flex: none;
    display: flex;
    align-items: center;
    justify-content: flex-end;
    height: 12px;
    padding: 0 6px;
    border-bottom: 1px solid #383838;
    background: #424242;
}
.strip.left{justify-content:flex-start;padding-left:4px;}
.grip{
    flex: none;
    width: 20px;
    height: 4px;
    margin: 4px auto 8px;
    background: repeating-linear-gradient(90deg,#3e3e3e 0 1px,transparent 1px 2px);
}
.toolbar{
    flex: none;
    display: flex;
    flex-direction: column;
    width: 39px;
    margin-right: 2px;
    border-left: 1px solid #383838;
    background: #535353;
}
.tool{
    position: relative;
    flex: none;
    display: flex;
    align-items: center;
    justify-content: center;
    width: 32px;
    height: 26px;
    margin-left: 3px;
    border-radius: 2px;
}
.tool::after{
    content: "";
    position: absolute;
    right: 3px;
    bottom: 4px;
    border: 2px solid transparent;
    border-right-color: #bbb;
    border-bottom-color: #bbb;
}
.tool.plain::after{display:none;}
.tool.active{background:#343434;box-shadow:inset 0 0 0 1px #696969;}
.mini{
    display: flex;
    gap: 5px;
    margin-top: 5px;
    padding-left: 3px;
}
.swatches{
    flex: none;
    display: grid;
    grid-template-columns: repeat(3,10px);
    grid-template-rows: repeat(3,10px);
    width: 30px;
    height: 30px;
}
.toolbar .swatches{margin:4px 0 4px 3px;}
.swatches .bg{
    grid-area: 2/2/4/4;
    border: 1px solid #333;
    background: #fff;
}
.swatches .fg{
    grid-area: 1/1/3/3;
    border: 1px solid #fff;
    outline: 1px solid #333;
    background: #000;
}

/* document */
.doc{
    flex: 1;
    min-width: 0;
    display: flex;
    flex-direction: column;
    background: #4a4a4a;
}
.tabs{
    flex: none;
    display: flex;
    height: 29px;
    border-bottom: 1px solid #383838;
    background: #424242;
}
.doc-tab{
    display: flex;
    align-items: center;
    gap: 9px;
    padding: 0 10px;
    border-right: 1px solid #383838;
    background: #535353;
    color: #f0f0f0;
    font-size: 11px;
    font-weight: 600;
}
.view{
    flex: 1;
    min-height: 0;
    display: grid;
    grid-template-columns: 17px 1fr 16px;
    grid-template-rows: 17px 1fr;
}
.corner{
    border-right: 1px dotted #777;
    border-bottom: 1px dotted #777;
}
.ruler-h,.ruler-v{
    position: relative;
    display: flex;
    overflow: hidden;
    color: #a0a0a0;
    font-size: 12px;
}
.ruler-h{
    padding-left: 5px;
    background:
        repeating-linear-gradient(90deg,#787878 0 1px,transparent 1px 10px) 5px 100%/100% 5px no-repeat,
        repeating-linear-gradient(90deg,#787878 0 1px,transparent 1px 5px) 0 100%/100% 3px no-repeat;
}
.ruler-h span{
    flex: none;
    width: 50px;
    padding-left: 1px;
    border-left: 1px solid #787878;
    line-height: 20px;
}
.ruler-v{
    flex-direction: column;
    padding-top: 5px;
    background:
        repeating-linear-gradient(#787878 0 1px,transparent 1px 10px) 100% 5px/5px 100% no-repeat,
        repeating-linear-gradient(#787878 0 1px,transparent 1px 5px) 100% 0/3px 100% no-repeat;
}
.ruler-v span{
    flex: none;
    height: 50px;
    padding: 1px 8px 0 1px;
    border-top: 1px solid #787878;
    line-height: 12px;
    word-break: break-all;
}
.ruler-h .mark{
    position: absolute;
    left: 782px;
    top: 1px;
    width: 1px;
    height: 9px;
    background: #fff;
}
.ruler-v .mark{
    position: absolute;
    left: 1px;
    top: 383px;
    width: 9px;
    height: 1px;
    background: #fff;
}
.canvas{
    display: flex;
    align-items: center;
    justify-content: center;
    overflow: hidden;
    background: #282828;
}
.page{
    position: relative;
    flex: none;
    width: 609px;
    height: 609px;
    background: #fff;
}
.cursor{
    position: absolute;
    left: 69px;
    top: 42px;
}
.hud{
    position: absolute;
    left: 279px;
    top: 176px;
    display: grid;
    grid-template-columns: 1fr auto;
    column-gap: 7px;
    width: 98px;
    padding: 3px 7px 4px;
    border: 1px solid #777;
    border-radius: 4px;
    background: linear-gradient(#555,#303030 30%,#383838 80%,#555);
    color: #fff;
    font-size: 9px;
    line-height: 12px;
    text-align: right;
    white-space: nowrap;
}
.status{
    flex: none;
    display: flex;
    align-items: center;
    height: 17px;
    border-bottom: 1px solid #383838;
    background: #4d4d4d;
}
.status input{
    width: 48px;
    height: 16px;
    padding-left: 11px;
    background: #424242;
    color: #f0f0f0;
}
.status .info{width:173px;padding-left:31px;}

/* collapsed panels */
.dock{
    flex: none;
    display: flex;
    flex-direction: column;
    width: 38px;
    margin-left: 3px;
}
.dock .strip{padding:0 5px;}
.group{
    flex: none;
    display: flex;
    flex-direction: column;
    align-items: center;
    padding-bottom: 5px;
    margin-bottom: 1px;
    background: #535353;
}
.group .grip{margin-bottom:1px;}
.group button{
    display: flex;
    align-items: center;
    justify-content: center;
    width: 30px;
    height: 26px;
}
.group button + button{height:28px;}
.group .fx{
    font: italic 16px "Open Sans",sans-serif;
    background: linear-gradient(#888,#888) 11px 4px/14px 14px no-repeat;
}
.group .chr{font-size:17px;}
.rest{flex:1;background:#535353;}

/* panels */
.panels{
    flex: none;
    display: flex;
    flex-direction: column;
    width: 284px;
    margin: 0 1px 1px 2px;
}
.panel{
    flex: none;
    display: flex;
    flex-direction: column;
    margin-bottom: 2px;
    background: #535353;
}
.ptabs{
    flex: none;
    display: flex;
    align-items: center;
    height: 28px;
    border-bottom: 1px solid #383838;
    background: #424242;
}
.ptabs button{
    height: 28px;
    padding: 0 7px 1px 9px;
    border-right: 1px solid #383838;
    border-bottom: 1px solid #383838;
    color: #a0a0a0;
    font-weight: 600;
}
.ptabs .on{
    background: #535353;
    border-bottom-color: #535353;
    color: #fff;
}
.ptabs svg{margin:0 5px 0 auto;color:#c0c0c0;}
.thumb-wrap{
    display: flex;
    justify-content: center;
    height: 140px;
    padding: 6px 3px 0 0;
}
.thumb{
    width: 129px;
    height: 129px;
    border: 2px solid #e05252;
    outline: 1px solid #7a3535;
    background: #fff;
}
.zoomrow{
    display: flex;
    align-items: center;
    gap: 6px;
    height: 25px;
    border-top: 1px solid #383838;
}
.zoomval{
    width: 58px;
    height: 24px;
    padding-left: 5px;
    background: #454545;
    color: #f0f0f0;
}
.zoom{flex:1;margin:0 4px 0 8px;height:14px;}
.zoom::-webkit-slider-runnable-track{height:3px;background:#777;}
.zoom::-webkit-slider-thumb{
    appearance: none;
    width: 12px;
    height: 10px;
    background: #f4f4f4;
    clip-path: polygon(50% 0,100% 60%,100% 100%,0 100%,0 60%);
}
.zoomrow svg:last-child{margin-right:26px;}
.picker{
    display: flex;
    height: 192px;
    padding: 8px 16px 0 9px;
}
.picker .swatches{margin:3px 6px 0 0;}
.field{
    flex: 1;
    display: flex;
    align-items: flex-end;
    height: 163px;
    background: linear-gradient(transparent,#000),linear-gradient(90deg,#fff,#f00);
}
.hue{
    width: 29px;
    height: 171px;
    margin: -4px 0 0 7px;
    writing-mode: vertical-lr;
    direction: rtl;
    background: linear-gradient(#f00,#f0f 17%,#00f 33%,#0ff 50%,#0f0 67%,#ff0 83%,#f00) 100% 50%/19px 163px no-repeat;
}
.hue::-webkit-slider-thumb{
    appearance: none;
    width: 8px;
    height: 8px;
    margin-right: 21px;
    background: #eee;
    clip-path: polygon(0 0,40% 0,100% 50%,40% 100%,0 100%);
}
.adjust{height:245px;}
.adjust p{padding:5px 9px 4px;}
.adj{
    display: flex;
    gap: 6px;
    margin-bottom: 11px;
    padding-left: 46px;
}
.a2{padding-left:34px;}
.dim{color:#989898;}
.layers{flex:1;min-height:0;margin:0;color:#8e8e8e;}
.lrow{
    flex: none;
    display: flex;
    align-items: center;
    height: 28px;
    padding-left: 3px;
    border-bottom: 1px solid #404040;
}
.lrow .select{margin:0;border-color:#626262;background:none;}
.lrow .select select{color:#8e8e8e;}
.lrow .num{border-color:#626262;background:none;}
.lrow .num button{border-color:#626262;}
.lrow .num input{color:#888;background:#4b4b4b;}
.filter{height:33px;padding-top:4px;gap:10px;color:#bbb;}
.filter .kind{width:88px;gap:4px;color:#888;}
.toggle{
    width: 9px;
    height: 17px;
    border-radius: 5px;
    background: radial-gradient(circle at 50% 4px,#aaa 4px,#474747 4px);
}
.blend{width:130px;}
.blend + label{margin-left:6px;}
.lock{height:29px;gap:9px;border:none;color:#aaa;}
.lock .lab,.lock .fill{color:#8e8e8e;}
.lock .lab{margin-left:3px;}
.lock .fill{margin:0 -5px 0 11px;}
.lock .num{margin-left:0;}
.list{flex:1;background:#4d4d4d;}
.layer{
    display: flex;
    height: 41px;
    padding-right: 16px;
    border-bottom: 1px solid #404040;
}
.eye{
    display: flex;
    align-items: center;
    justify-content: center;
    width: 30px;
    background: #535353;
}
.lname{
    flex: 1;
    display: flex;
    align-items: center;
    gap: 10px;
    padding: 0 15px 0 4px;
    background: #6a6a6a;
    color: #f4f4f4;
}
.lname i{
    width: 32px;
    height: 32px;
    border: 1px solid #222;
    background: #fff;
}
.lname svg{margin-left:auto;}
.lfoot{
    flex: none;
    display: flex;
    justify-content: flex-end;
    align-items: center;
    height: 25px;
    padding-right: 20px;
    border-top: 1px solid #404040;
    color: #dcdcdc;
}
.lfoot button{
    display: flex;
    justify-content: center;
    width: 27px;
}
.lfoot .off{color:#8e8e8e;}
.lfoot .lfx{font-size:13px;font-style:italic;}

/* taskbar */
.taskbar{
    flex: none;
    display: flex;
    height: 40px;
    background: linear-gradient(90deg,#22383f,#22373f 55%,#1c2947 80%,#1b2643);
    color: #fff;
}
.taskbar button{
    display: flex;
    align-items: center;
    justify-content: center;
}
.taskbar .start{width:48px;}
.search{
    display: flex;
    align-items: center;
    gap: 11px;
    width: 344px;
    padding-left: 11px;
    border: 1px solid #666;
    background: #323232;
}
.search input{font-size:14px;}
.search input::placeholder{color:#ddd;}
.apps{display:flex;gap:1px;margin-left:1px;}
.apps button{
    width: 48px;
    height: 40px;
}
.run{
    background: linear-gradient(#76b9ed,#76b9ed) 50% 100%/40px 2px no-repeat;
}
.run.cur{
    background-color: #4f626c;
    background-size: 48px 2px;
}
.app{
    width: 22px;
    height: 21px;
    border-radius: 4px;
    font: 700 12px/20px "Open Sans",sans-serif;
    text-align: center;
}
.ai{background:#330000;color:#ff9a00;}
.ps{background:#001e36;color:#31a8ff;}
.ae{background:#00005b;color:#9999ff;}
.cc{
    display: flex;
    align-items: center;
    justify-content: center;
    background: conic-gradient(#f33 0,#f83 10%,#fc3 30%,#dd4 40%,#4cc 50%,#48f 58%,#a4e 70%,#e26 85%,#f33);
}
.tray{
    display: flex;
    align-items: center;
    margin: 0 3px 0 auto;
    padding-right: 12px;
    border-right: 1px solid #7c8494;
}
.tray button{width:32px;height:40px;}
.clock{
    width: 66px;
    font-size: 11px;
    line-height: 18px;
    text-align: center;
}
.clock span{display:block;}
.tray .note{position:relative;width:36px;}
.note b{
    position: absolute;
    left: 19px;
    top: 20px;
    width: 16px;
    height: 16px;
    border: 1px solid #999;
    border-radius: 50%;
    background: #333b45;
    font-size: 10px;
    line-height: 14px;
    text-align: center;
}
```
